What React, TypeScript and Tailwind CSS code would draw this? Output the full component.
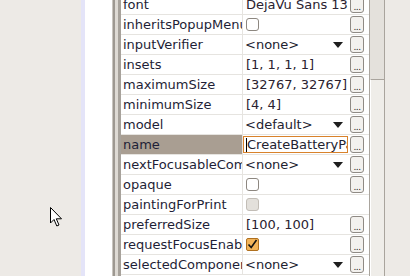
import React from 'react';

type Kind = 'text' | 'check' | 'checkDisabled' | 'checked' | 'combo' | 'editor';

interface PropRow {
  name: string;
  kind: Kind;
  value?: string;
  button: boolean;
}

const rows: PropRow[] = [
  { name: 'font', kind: 'text', value: 'DejaVu Sans 13', button: true },
  { name: 'inheritsPopupMenu', kind: 'check', button: true },
  { name: 'inputVerifier', kind: 'combo', value: '<none>', button: true },
  { name: 'insets', kind: 'text', value: '[1, 1, 1, 1]', button: true },
  { name: 'maximumSize', kind: 'text', value: '[32767, 32767]', button: true },
  { name: 'minimumSize', kind: 'text', value: '[4, 4]', button: true },
  { name: 'model', kind: 'combo', value: '<default>', button: true },
  { name: 'name', kind: 'editor', value: 'CreateBatteryPanel', button: true },
  { name: 'nextFocusableComponent', kind: 'combo', value: '<none>', button: true },
  { name: 'opaque', kind: 'check', button: true },
  { name: 'paintingForPrint', kind: 'checkDisabled', button: false },
  { name: 'preferredSize', kind: 'text', value: '[100, 100]', button: true },
  { name: 'requestFocusEnabled', kind: 'checked', button: true },
  { name: 'selectedComponent', kind: 'combo', value: '<none>', button: true },
];

const font = { fontFamily: '"DejaVu Sans", "Liberation Sans", sans-serif' };

const DotsButton: React.FC = () => (
  <div className="w-[14px] h-[17px] mt-px rounded-[3px] border border-[#8f8a84] bg-[#f3f1ee] flex items-end justify-center overflow-hidden">
    <span className="text-[9px] leading-[9px] text-[#222] tracking-[-0.5px]">...</span>
  </div>
);

const Triangle: React.FC = () => (
  <svg width="10" height="6" viewBox="0 0 10 6" className="shrink-0">
    <path d="M0 0 H10 L5 6 Z" fill="#1e1e1e" />
  </svg>
);

const CheckBox: React.FC<{ kind: Kind }> = ({ kind }) => {
  if (kind === 'checked') {
    return (
      <div className="w-[13px] h-[13px] ml-[3px] rounded-[2px] border border-[#b0701e] bg-[#f2b45a] flex items-center justify-center">
        <svg width="11" height="11" viewBox="0 0 11 11">
          <path d="M1.5 5.5 L4.2 8.5 L9.5 1" stroke="#111" strokeWidth="1.6" fill="none" />
        </svg>
      </div>
    );
  }
  if (kind === 'checkDisabled') {
    return <div className="w-[13px] h-[13px] ml-[3px] rounded-[3px] border border-[#c2bdb6] bg-[#e3e0db]" />;
  }
  return <div className="w-[13px] h-[13px] ml-[3px] rounded-[3px] border border-[#8d8780] bg-white" />;
};

const ValueCell: React.FC<{ row: PropRow }> = ({ row }) => {
  switch (row.kind) {
    case 'check':
    case 'checked':
    case 'checkDisabled':
      return (
        <div className="flex items-center h-full">
          <CheckBox kind={row.kind} />
        </div>
      );
    case 'combo':
      return (
        <div className="flex items-center h-full pl-[2px] pr-[6px] justify-between">
          <span className="text-[13px] text-[#222230] whitespace-nowrap">{row.value}</span>
          <Triangle />
        </div>
      );
    case 'editor':
      return (
        <div className="h-full py-px pr-px">
          <div className="h-full border border-[#d9822b] bg-white flex items-center overflow-hidden pl-[2px]">
            <div className="w-px h-[14px] bg-black shrink-0" />
            <span className="text-[13px] text-[#222230] whitespace-nowrap">{row.value}</span>
          </div>
        </div>
      );
    default:
      return (
        <div className="flex items-center h-full pl-[3px]">
          <span className="text-[13px] text-[#2a2230] whitespace-nowrap">{row.value}</span>
        </div>
      );
  }
};

const PropertyRow: React.FC<{ row: PropRow }> = ({ row }) => {
  const selected = row.kind === 'editor';
  return (
    <div className="flex h-[20px] border-b border-[#e6e4e0]">
      <div
        className={`w-[122px] shrink-0 flex items-center pl-[2px] overflow-hidden border-r border-[#e6e4e0] ${
          selected ? 'bg-[#a99e92]' : 'bg-white'
        }`}
      >
        <span className="text-[13px] text-[#1e1e36] whitespace-nowrap">{row.name}</span>
      </div>
      <div className="w-[106px] shrink-0 overflow-hidden">
        <ValueCell row={row} />
      </div>
      <div className="w-[16px] shrink-0 flex justify-center">{row.button && <DotsButton />}</div>
    </div>
  );
};

const Cursor: React.FC = () => (
  <svg width="13" height="21" viewBox="0 0 13 21">
    <path
      d="M0.5 0.5 L0.5 16 L4 12.5 L6.8 19 L9 18 L6.3 11.8 L11.5 11.8 Z"
      fill="#fff"
      stroke="#000"
      strokeWidth="1"
      strokeLinejoin="round"
    />
  </svg>
);

export default function App() {
  return (
    <div className="w-[410px] h-[276px] flex overflow-hidden bg-[#edeae6]" style={font}>
      {/* 左侧面板 */}
      <div className="w-[81px] shrink-0 bg-[#edeae6] flex flex-col">
        <div className="h-[207px]" />
        <div className="pl-[50px]">
          <Cursor />
        </div>
      </div>
      <div className="w-[4px] shrink-0 bg-[#e4e4f8]" />
      <div className="w-[27px] shrink-0 bg-white" />

      {/* 边框 */}
      <div className="w-px shrink-0 bg-[#c9c5bf]" />
      <div className="w-[2px] shrink-0 bg-[#9d9891]" />
      <div className="w-[3px] shrink-0 bg-[#dedad4]" />
      <div className="w-[3px] shrink-0 bg-[#a7a29b]" />

      {/* 属性表 */}
      <div className="w-[248px] shrink-0 bg-white overflow-hidden">
        <div className="-mt-[5px] flex flex-col">
          {rows.map((r) => (
            <PropertyRow key={r.name} row={r} />
          ))}
        </div>
      </div>

      {/* 滚动条 */}
      <div className="w-[16px] shrink-0 flex flex-col border-l border-[#a9a49d] border-r">
        <div className="h-[79px] bg-[#e4e1dc]" />
        <div className="flex-1 bg-[#efede9] border-t border-[#a9a49d] border-l border-l-white" />
      </div>
      <div className="flex-1 bg-[#edeae6]" />
    </div>
  );
}
